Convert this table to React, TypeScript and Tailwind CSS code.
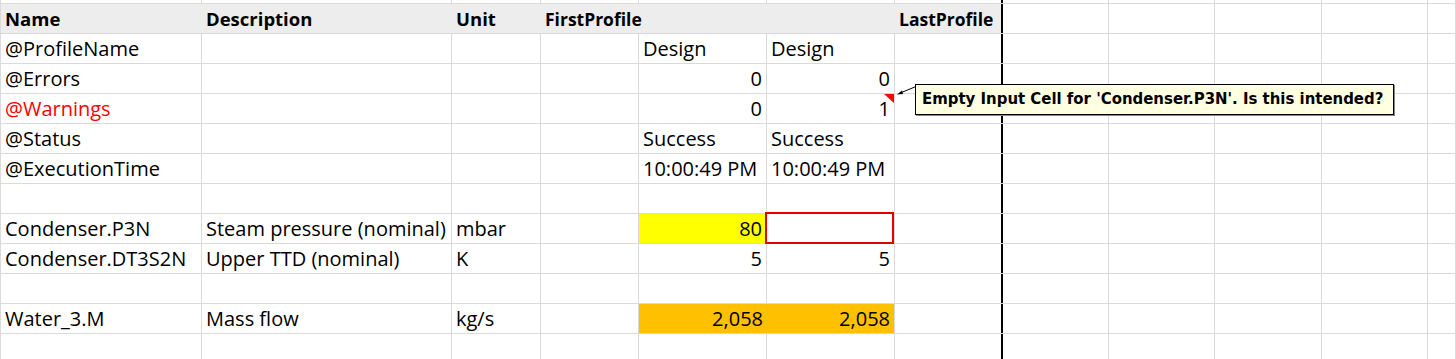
import React from "react";

type CellSpec = {
  text?: string;
  right?: boolean;
  bold?: boolean;
  red?: boolean;
  small?: boolean;
  bg?: string;
  noLine?: boolean;
  box?: boolean;
  note?: boolean;
};

const widths = [
  "w-[201px]",
  "w-[250px]",
  "w-[89px]",
  "w-[98px]",
  "w-[128px]",
  "w-[128px]",
  "w-[108px]",
  "w-[106px]",
  "w-[106px]",
  "w-[107px]",
  "w-[106px]",
  "flex-1",
];

const rows: CellSpec[][] = [
  [
    { text: "Name", bold: true, bg: "bg-[#ededed]", noLine: true },
    { text: "Description", bold: true, bg: "bg-[#ededed]", noLine: true },
    { text: "Unit", bold: true, bg: "bg-[#ededed]", noLine: true },
    { text: "FirstProfile", bold: true, small: true, bg: "bg-[#ededed]", noLine: true },
    { bg: "bg-[#ededed]", noLine: true },
    { bg: "bg-[#ededed]", noLine: true },
    { text: "LastProfile", bold: true, small: true, bg: "bg-[#ededed]" },
  ],
  [{ text: "@ProfileName" }, {}, {}, {}, { text: "Design" }, { text: "Design" }],
  [{ text: "@Errors" }, {}, {}, {}, { text: "0", right: true }, { text: "0", right: true }],
  [
    { text: "@Warnings", red: true },
    {},
    {},
    {},
    { text: "0", right: true },
    { text: "1", right: true, note: true },
  ],
  [{ text: "@Status" }, {}, {}, {}, { text: "Success" }, { text: "Success" }],
  [{ text: "@ExecutionTime" }, {}, {}, {}, { text: "10:00:49 PM" }, { text: "10:00:49 PM" }],
  [],
  [
    { text: "Condenser.P3N" },
    { text: "Steam pressure (nominal)" },
    { text: "mbar" },
    {},
    { text: "80", right: true, bg: "bg-[#ffff00]" },
    { box: true },
  ],
  [
    { text: "Condenser.DT3S2N" },
    { text: "Upper TTD (nominal)" },
    { text: "K" },
    {},
    { text: "5", right: true },
    { text: "5", right: true },
  ],
  [],
  [
    { text: "Water_3.M" },
    { text: "Mass flow" },
    { text: "kg/s" },
    {},
    { text: "2,058", right: true, bg: "bg-[#ffc000]", noLine: true },
    { text: "2,058", right: true, bg: "bg-[#ffc000]" },
  ],
];

function Cell({ spec, col }: { spec: CellSpec; col: number }) {
  const thick = col === 6;
  return (
    <div
      className={[
        "relative h-full shrink-0 flex items-center whitespace-nowrap px-[4px] leading-[30px]",
        widths[col],
        spec.bg ?? "",
        thick ? "border-r-2 border-r-black" : spec.noLine ? "" : "border-r border-r-[#dadada]",
        spec.right ? "justify-end" : "justify-start",
      ].join(" ")}
    >
      {spec.box && (
        <div className="absolute -left-[2px] -top-[2px] right-0 -bottom-[1px] z-10 border-2 border-[#e00000]" />
      )}
      {spec.text && (
        <span
          className={[
            "relative z-10",
            spec.bold ? "font-bold" : "",
            spec.small ? "text-[17.5px]" : spec.bold ? "text-[18.5px]" : "text-[20px]",
            spec.red ? "text-[#ff0000]" : "text-black",
          ].join(" ")}
        >
          {spec.text}
        </span>
      )}
      {spec.note && (
        <svg className="absolute right-0 top-0" width="10" height="9" viewBox="0 0 10 9">
          <polygon points="0,0 10,0 10,9" fill="#ff0000" />
        </svg>
      )}
    </div>
  );
}

function Row({ cells, h = "h-[30px]" }: { cells: CellSpec[]; h?: string }) {
  return (
    <div className={`flex ${h} border-b border-b-[#dadada]`}>
      {widths.map((_, i) => (
        <Cell key={i} spec={cells[i] ?? {}} col={i} />
      ))}
    </div>
  );
}

export default function App() {
  return (
    <div
      className="relative w-[1456px] h-[359px] overflow-hidden bg-white border-l border-l-[#dadada]"
      style={{ fontFamily: '"Open Sans", sans-serif' }}
    >
      <Row cells={[]} h="h-[4px]" />
      {rows.map((r, i) => (
        <Row key={i} cells={r} />
      ))}
      <Row cells={[]} h="h-[30px]" />

      {/* comment arrow */}
      <svg className="absolute left-[890px] top-[82px] z-20" width="30" height="20" viewBox="0 0 30 20">
        <line x1="8" y1="11.5" x2="25" y2="4.5" stroke="black" strokeWidth="1" />
        <polygon points="6,12.5 11,8.5 12,12" fill="black" />
      </svg>

      {/* comment box */}
      <div className="absolute z-20 left-[914px] top-[84px] h-[31px] w-[479px] border border-black bg-[#ffffe1] flex items-center pl-[6px] shadow-[1px_1px_0_#888]">
        <span
          className="font-bold text-[16.6px] text-black whitespace-nowrap"
          style={{ fontFamily: '"DejaVu Sans Condensed", "DejaVu Sans", sans-serif' }}
        >
          Empty Input Cell for 'Condenser.P3N'. Is this intended?
        </span>
      </div>
    </div>
  );
}
